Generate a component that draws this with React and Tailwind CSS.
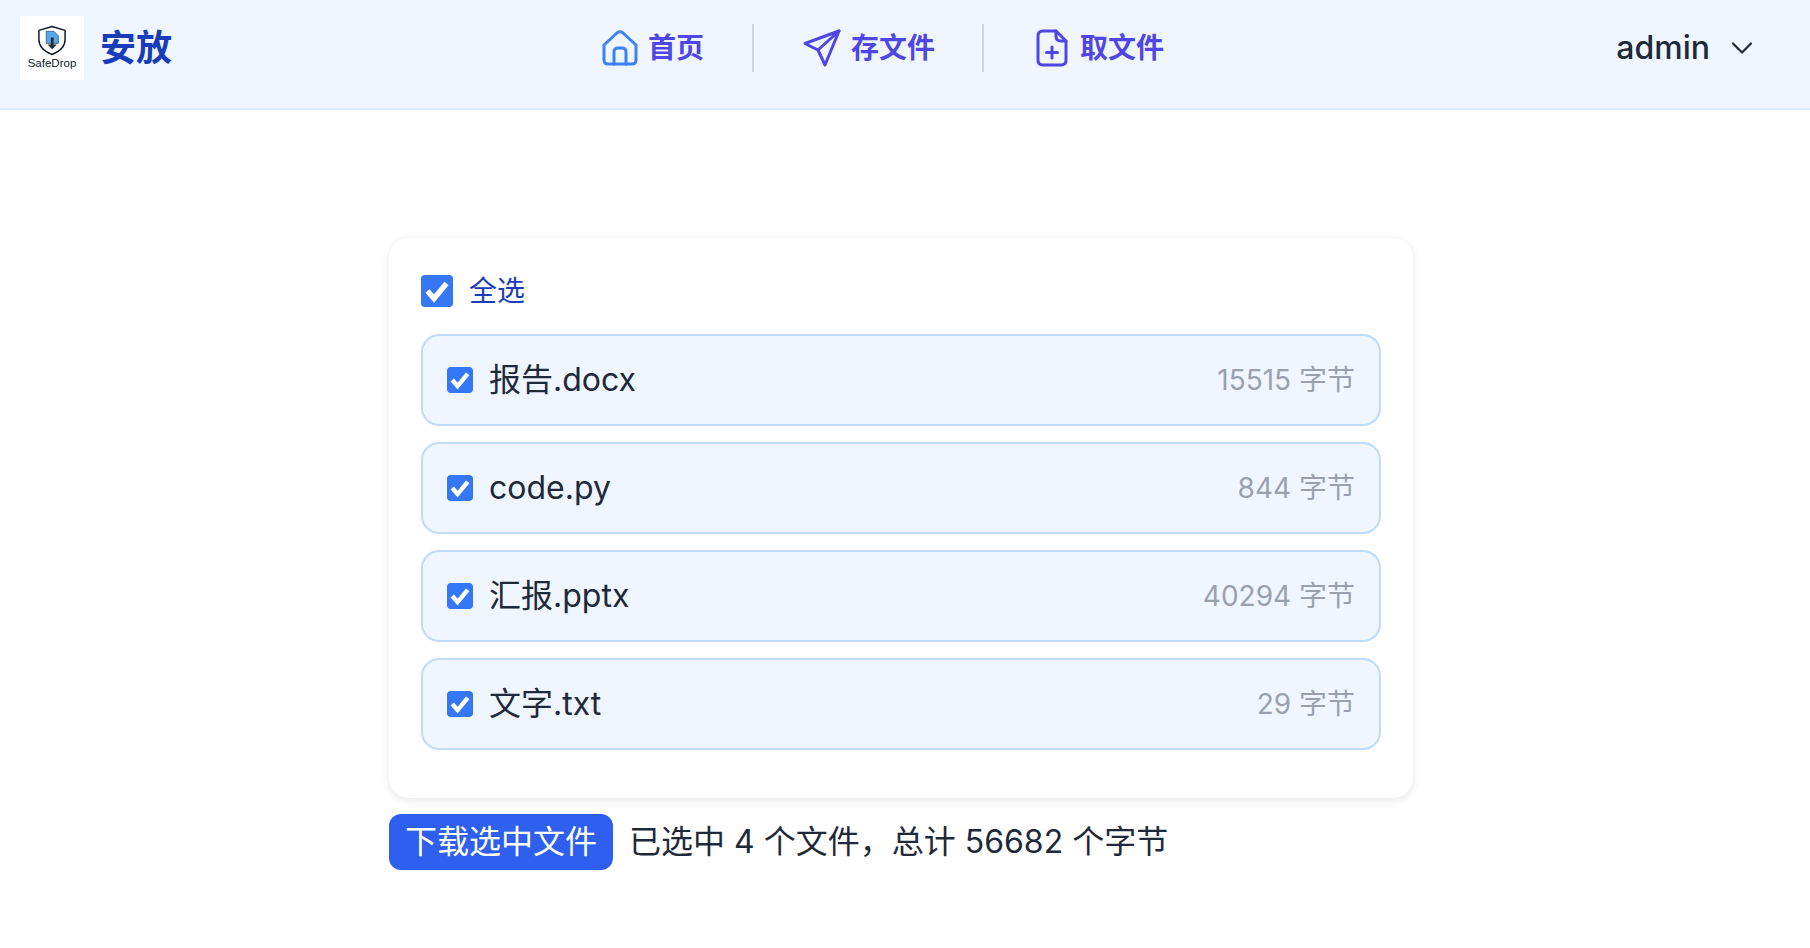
const fontStack = { fontFamily: 'Inter, "Noto Sans CJK SC", sans-serif' };

const files = [
  { name: "报告.docx", size: 15515 },
  { name: "code.py", size: 844 },
  { name: "汇报.pptx", size: 40294 },
  { name: "文字.txt", size: 29 },
];

function Logo() {
  return (
    <div className="flex h-16 w-16 flex-col items-center bg-white pt-[9px]">
      <svg width="30" height="31" viewBox="0 0 30 32" fill="none">
        {/* shield */}
        <path d="M15 1.5 L28.5 5.5 V15 C28.5 22.5 22.5 27.5 15 30.5 C7.5 27.5 1.5 22.5 1.5 15 V5.5 Z" stroke="#111827" strokeWidth="1.5" strokeLinejoin="round" fill="#fff" />
        {/* file + arrow */}
        <path d="M9 6.5 H17 L21.5 11 V19 H9 Z" fill="#56a8ec" stroke="#1f2937" strokeWidth="0.6" />
        <path d="M13.8 13 H16.6 V20 H20 L15.2 25 L10.4 20 H13.8 Z" fill="#1f2937" />
      </svg>
      <span className="text-[11.5px] leading-[14px] text-[#111827]" style={{ fontFamily: '"Liberation Sans", sans-serif' }}>SafeDrop</span>
    </div>
  );
}

function HomeIcon() {
  return (
    <svg width="36" height="36" viewBox="0 0 36 36" fill="none" stroke="#3b82f6" strokeWidth="3" strokeLinejoin="round" strokeLinecap="round">
      <path d="M2 15 L15.5 2.5 Q18 1 20.5 2.5 L34 15 V30 Q34 34 30 34 H6 Q2 34 2 30 Z" />
      <path d="M12 34 V22 Q12 18 16 18 H20 Q24 18 24 22 V34" />
    </svg>
  );
}

function SendIcon() {
  return (
    <svg width="38" height="38" viewBox="0 0 38 38" fill="none" stroke="#4f46e5" strokeWidth="3" strokeLinejoin="round" strokeLinecap="round">
      <path d="M36 2 L2 14.5 L15 21 L22 36 Z" />
      <path d="M36 2 L15 21" />
    </svg>
  );
}

function FilePlusIcon() {
  return (
    <svg width="34" height="38" viewBox="0 0 34 38" fill="none" stroke="#4f46e5" strokeWidth="3" strokeLinejoin="round" strokeLinecap="round">
      <path d="M20 2 H7 Q2 2 2 7 V31 Q2 36 7 36 H25 Q30 36 30 31 V12 Z" />
      <path d="M20 2 V7 Q20 12 25 12 H30" />
      <path d="M16 18 V29 M10.5 23.5 H21.5" />
    </svg>
  );
}

function Check({ size }) {
  return (
    <span className="flex shrink-0 items-center justify-center rounded-[4px] bg-[#3478f6]" style={{ width: size, height: size }}>
      <svg width={size} height={size} viewBox="0 0 32 32" fill="none">
        <path d="M6.5 16 L13 23.5 L25.5 8.5" stroke="#fff" strokeWidth="5.4" />
      </svg>
    </span>
  );
}

function NavItem({ icon, label, className }) {
  return (
    <a className={`flex items-center gap-2.5 text-[28px] font-semibold text-[#4f46e5] ${className}`}>
      {icon}
      <span>{label}</span>
    </a>
  );
}

export default function App() {
  const totalBytes = files.reduce((sum, f) => sum + f.size, 0);

  return (
    <div className="min-h-screen bg-white" style={fontStack}>
      {/* top bar */}
      <header className="flex h-[110px] items-center border-b-2 border-blue-100 bg-blue-50 pb-3 pl-5 pr-[56px]">
        <div className="flex w-[582px] items-center gap-4">
          <Logo />
          <span className="text-[36px] font-bold text-blue-800">安放</span>
        </div>
        <nav className="flex items-center">
          <NavItem icon={<HomeIcon />} label="首页" className="w-[150px]" />
          <div className="h-12 w-0.5 bg-gray-300" />
          <NavItem icon={<SendIcon />} label="存文件" className="w-[228px] pl-[49px]" />
          <div className="h-12 w-0.5 bg-gray-300" />
          <NavItem icon={<FilePlusIcon />} label="取文件" className="ml-[52px]" />
        </nav>
        <div className="ml-auto flex items-center gap-5 text-[32px] font-medium text-gray-800">
          <span>admin</span>
          <svg width="24" height="24" viewBox="0 0 24 24" fill="none" stroke="#1f2937" strokeWidth="2.2" strokeLinecap="round" strokeLinejoin="round">
            <path d="M3 7.5 L12 16.5 L21 7.5" />
          </svg>
        </div>
      </header>

      {/* file list */}
      <main className="flex justify-center pr-2 pt-[128px]">
        <div className="w-[1024px]">
          <div className="rounded-[20px] bg-white p-8 shadow-[0_2px_10px_rgba(0,0,0,0.1)]">
            <div className="flex items-center gap-4">
              <Check size={32} />
              <span className="text-[28px] text-blue-800">全选</span>
            </div>
            <ul className="mt-[22px] flex flex-col gap-4 pb-4">
              {files.map((f) => (
                <li key={f.name} className="flex h-[92px] items-center justify-between rounded-[18px] border-2 border-blue-200 bg-blue-50 px-6">
                  <div className="flex items-center gap-4">
                    <Check size={26} />
                    <span className="text-[32px] text-gray-800">{f.name}</span>
                  </div>
                  <span className="text-[28px] text-gray-400">{f.size} 字节</span>
                </li>
              ))}
            </ul>
          </div>

          <div className="mt-4 flex items-center gap-4">
            <button className="h-14 rounded-xl bg-[#2f5fef] px-4 text-[32px] text-white">下载选中文件</button>
            <span className="text-[32px] text-gray-800">已选中 {files.length} 个文件，总计 {totalBytes} 个字节</span>
          </div>
        </div>
      </main>
    </div>
  );
}
